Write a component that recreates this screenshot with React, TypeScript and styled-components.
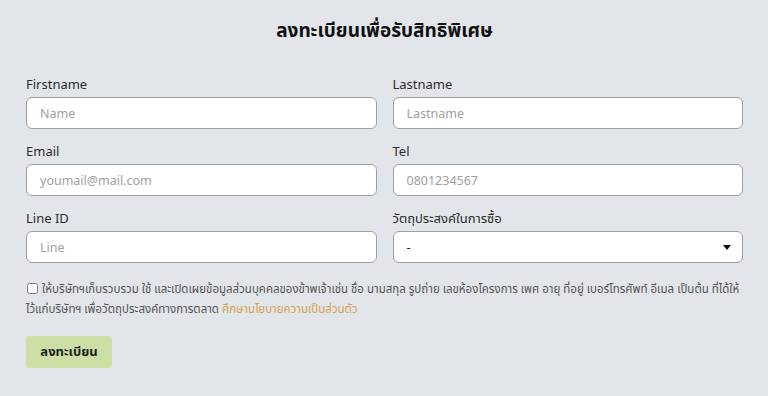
import React from "react";
import styled, { createGlobalStyle } from "styled-components";

const Global = createGlobalStyle`
  html, body { margin: 0; padding: 0; background: #e2e6ea; }
  body { font-family: "Noto Sans", "Noto Sans Thai", "Liberation Sans", sans-serif; }
  * { box-sizing: border-box; }
`;

const Page = styled.div`
  padding: 16px 25px 28px 26px;
  background: #e2e6ea;
  min-height: 396px;
`;

const Title = styled.h1`
  margin: 0 0 31px;
  text-align: center;
  font-size: 19px;
  line-height: 28px;
  font-weight: 700;
  color: #111;
`;

const Grid = styled.div`
  display: grid;
  grid-template-columns: 1fr 1fr;
  column-gap: 16px;
  row-gap: 13px;
`;

const Field = styled.div`
  display: flex;
  flex-direction: column;
  gap: 4px;
`;

const Label = styled.label`
  font-size: 13px;
  line-height: 18px;
  color: #2b2b2b;
`;

const Input = styled.input`
  height: 32px;
  border: 1px solid #9aa0a6;
  border-radius: 6px;
  background: #fff;
  padding: 0 13px;
  font-family: inherit;
  font-size: 12.5px;
  color: #333;
  outline: none;
  &::placeholder { color: #a0a0a0; }
`;

const SelectBox = styled.div`
  height: 32px;
  border: 1px solid #9aa0a6;
  border-radius: 6px;
  background: #fff;
  display: flex;
  align-items: center;
  padding: 0 13px;
  font-size: 13px;
  color: #222;
`;

const Caret = styled.span`
  margin-left: auto;
  width: 0;
  height: 0;
  border-left: 4.5px solid transparent;
  border-right: 4.5px solid transparent;
  border-top: 5px solid #111;
  margin-right: -2px;
`;

const Consent = styled.div`
  margin-top: 16px;
  font-size: 11.5px;
  line-height: 20px;
  color: #555;
`;

const Check = styled.input`
  width: 11px;
  height: 11px;
  margin: 0 4px 0 1px;
  vertical-align: -1px;
`;

const Link = styled.a`
  color: #d6a24f;
  text-decoration: none;
`;

const Button = styled.button`
  margin-top: 17px;
  height: 32px;
  width: 86px;
  border: none;
  border-radius: 3px;
  background: #cddfa4;
  font-family: inherit;
  font-size: 13px;
  font-weight: 700;
  color: #1d1d1d;
`;

export default function App() {
  return (
    <>
      <Global />
      <Page>
        <Title>ลงทะเบียนเพื่อรับสิทธิพิเศษ</Title>
        <Grid>
          <Field>
            <Label>Firstname</Label>
            <Input placeholder="Name" />
          </Field>
          <Field>
            <Label>Lastname</Label>
            <Input placeholder="Lastname" />
          </Field>
          <Field>
            <Label>Email</Label>
            <Input placeholder="youmail@mail.com" />
          </Field>
          <Field>
            <Label>Tel</Label>
            <Input placeholder="0801234567" />
          </Field>
          <Field>
            <Label>Line ID</Label>
            <Input placeholder="Line" />
          </Field>
          <Field>
            <Label>วัตถุประสงค์ในการซื้อ</Label>
            <SelectBox>
              <span>-</span>
              <Caret />
            </SelectBox>
          </Field>
        </Grid>
        <Consent>
          <Check type="checkbox" />
          ให้บริษัทฯเก็บรวบรวม ใช้ และเปิดเผยข้อมูลส่วนบุคคลของข้าพเจ้าเช่น ชื่อ นามสกุล รูปถ่าย เลขห้องโครงการ เพศ อายุ ที่อยู่ เบอร์โทรศัพท์ อีเมล เป็นต้น ที่ได้ให้
          <br />
          ไว้แก่บริษัทฯ เพื่อวัตถุประสงค์ทางการตลาด <Link href="#">ศึกษานโยบายความเป็นส่วนตัว</Link>
        </Consent>
        <Button>ลงทะเบียน</Button>
      </Page>
    </>
  );
}
